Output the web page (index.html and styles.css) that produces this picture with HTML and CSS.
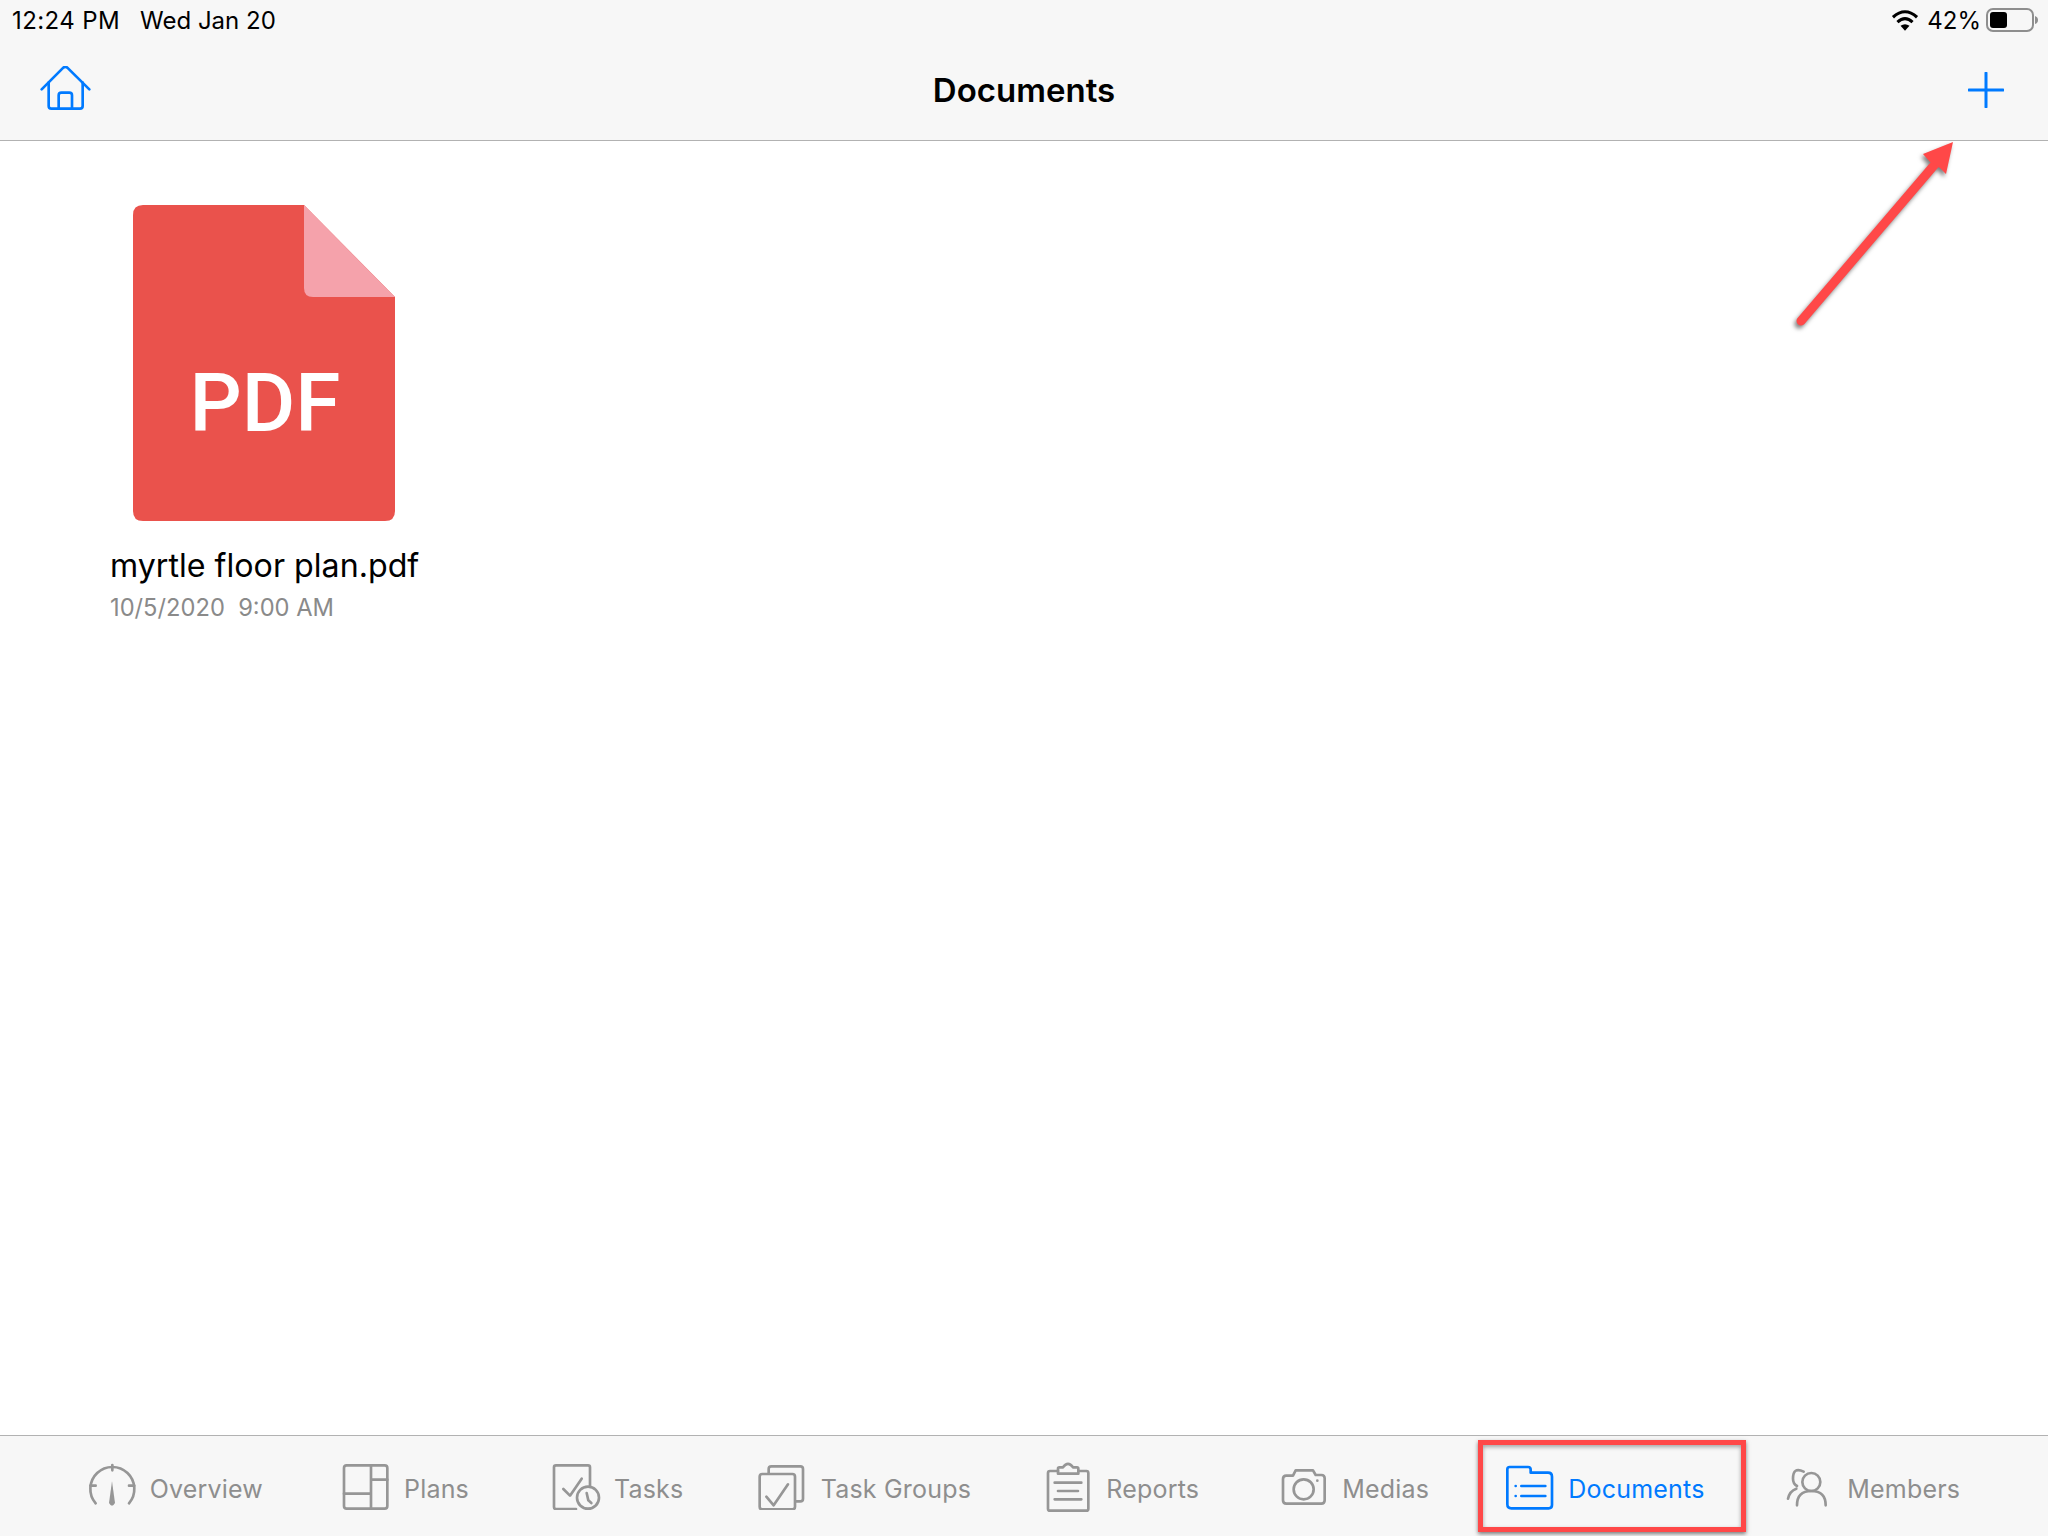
FILE: index.html
```html
<!DOCTYPE html>
<html lang="en">
<head>
<meta charset="utf-8">
<title>Documents</title>
<link rel="stylesheet" href="styles.css">
</head>
<body>
<div class="app">
  <header class="topbar">
    <div class="status">
      <div class="status-left"><span class="status-time">12:24 PM</span><span>Wed Jan 20</span></div>
      <div class="status-right">
        <svg class="wifi" viewBox="95 26 80 64"><path class="wifi-arc" d="M100 50Q135 18 170 50"/><path class="wifi-arc" d="M113 64Q135 44 157 64"/><path class="wifi-dot" d="M122 75Q135 65 148 75L135 89Z"/></svg>
        <span class="battery-text">42%</span>
        <svg class="battery" viewBox="0 0 52 24"><rect class="battery-shell" x="1" y="1" width="46" height="22" rx="6"/><rect class="battery-fill" x="4" y="4" width="17" height="16" rx="3"/><path class="battery-nub" d="M49 8q3 1 3 4t-3 4z"/></svg>
      </div>
    </div>
    <nav class="nav">
      <svg class="home-icon" viewBox="120 198 156 144"><path d="M125 268L190 203q6-5 12 0L268 268"/><path d="M146 248V318q0 8 8 8H240q8 0 8-8V248"/><path d="M176 326V286q0-8 8-8H208q8 0 8 8V326"/></svg>
      <h1 class="title">Documents</h1>
      <svg class="plus-icon" viewBox="0 0 36 36"><path d="M18 1V35M1 18H35"/></svg>
    </nav>
  </header>

  <main class="content">
    <article class="file">
      <svg class="file-icon" viewBox="0 0 262 316">
        <path class="sheet" d="M10 0H171L262 92V306q0 10-10 10H10q-10 0-10-10V10q0-10 10-10Z"/>
        <path class="fold" d="M171 0L262 92H180q-9 0-9-9Z"/>
        <text class="file-badge" x="132" y="226" text-anchor="middle">PDF</text>
      </svg>
      <div class="file-name">myrtle floor plan.pdf</div>
      <div class="file-date">10/5/2020&nbsp;&nbsp;9:00 AM</div>
    </article>
  </main>

  <footer class="tabbar">
    <div class="tab">
      <svg viewBox="80 125 150 144" class="tab-icon"><path d="M106 249A66 66 0 1 1 206 249"/><path d="M156 134V150M90 196H106M206 196H222"/><path class="solid" d="M155 183L164 248Q155 264 146 248Z"/></svg>
      <span class="tab-label">Overview</span>
    </div>
    <div class="tab">
      <svg viewBox="843 125 150 144" class="tab-icon"><rect x="852" y="135" width="130" height="130" rx="8"/><path d="M933 135V265M852 220H933M933 178H982"/></svg>
      <span class="tab-label">Plans</span>
    </div>
    <div class="tab">
      <svg viewBox="93 125 150 144" class="tab-icon"><path d="M168 266H108q-6 0-6-6V141q0-6 6-6H204q6 0 6 6V196"/><path d="M130 206L150 226L185 175"/><circle cx="204" cy="232" r="33"/><path d="M200 218L205 240L214 248"/></svg>
      <span class="tab-label">Tasks</span>
    </div>
    <div class="tab">
      <svg viewBox="713 125 150 144" class="tab-icon"><path d="M745 160V146q0-8 8-8H840q8 0 8 8V235q0 8-8 8H825"/><rect x="718" y="161" width="106" height="106" rx="8"/><path d="M738 229L760 255L803 192"/></svg>
      <span class="tab-label">Task Groups</span>
    </div>
    <div class="tab">
      <svg viewBox="130 125 150 144" class="tab-icon tab-icon-tall"><path d="M175 152H151q-6 0-6 6V265q0 6 6 6H260q6 0 6-6V158q0-6-6-6H236"/><path d="M175 160V145q0-4 4-4H190Q205 120 220 141H232q4 0 4 4V160Z"/><path d="M165 187H245M175 212H235M165 237H245"/></svg>
      <span class="tab-label">Reports</span>
    </div>
    <div class="tab">
      <svg viewBox="838 125 150 144" class="tab-icon"><path d="M860 166H880L888 150H940L948 164H965q10 0 10 10V240q0 10-10 10H860q-10 0-10-10V176q0-10 10-10Z"/><circle cx="912" cy="207" r="30"/><circle class="solid" cx="953" cy="181" r="4"/></svg>
      <span class="tab-label">Medias</span>
    </div>
    <div class="tab tab-active">
      <svg viewBox="136 125 150 144" class="tab-icon"><path d="M150 140H205q8 0 8 8V157H265q12 0 12 12V254q0 10-10 10H155q-12 0-12-12V147q0-7 7-7Z"/><path d="M185 197H257M185 227H257"/><circle class="solid" cx="168" cy="197" r="4"/><circle class="solid" cx="168" cy="227" r="4"/></svg>
      <span class="tab-label">Documents</span>
    </div>
    <div class="tab">
      <svg viewBox="973 125 150 144" class="tab-icon"><circle cx="1055" cy="185" r="27"/><path d="M1012 255Q1012 212 1055 212Q1098 212 1098 255"/><path d="M1032 154Q1000 138 1000 175Q1000 190 1012 197"/><path d="M985 235Q990 212 1010 205"/></svg>
      <span class="tab-label">Members</span>
    </div>
  </footer>

  <svg class="arrow" viewBox="1780 130 190 210"><path class="arrow-line" d="M1801 321L1936 163"/><path class="arrow-head" d="M1953 142L1923 154L1930 162L1940 168L1946 174Z"/></svg>
  <div class="highlight"></div>
</div>
</body>
</html>
```
FILE: styles.css
```css
* { box-sizing: border-box; }
html, body { margin: 0; padding: 0; background: #fff; }
.app {
  position: relative;
  width: 2048px;
  height: 1536px;
  display: flex;
  flex-direction: column;
  overflow: hidden;
  font-family: Inter, "Liberation Sans", sans-serif;
  color: #000;
}

.topbar {
  height: 141px;
  background: #f7f7f7;
  border-bottom: 1px solid #b2b2b2;
  flex: none;
}
.status {
  height: 40px;
  display: flex;
  justify-content: space-between;
  align-items: center;
  padding: 0 10px 0 12px;
  font-size: 24px;
}
.status-left { display: flex; gap: 20px; }
.status-time { letter-spacing: 0.4px; }
.status-right { display: flex; align-items: center; }
.wifi { width: 28px; height: 22px; margin-right: 8px; }
.wifi-arc { fill: none; stroke: #000; stroke-width: 9; }
.wifi-dot { fill: #000; }
.battery-text { margin-right: 5px; }
.battery { width: 52px; height: 24px; }
.battery-shell { fill: none; stroke: #8e8e8e; stroke-width: 2; }
.battery-fill { fill: #000; }
.battery-nub { fill: #8e8e8e; }

.nav {
  height: 100px;
  display: grid;
  grid-template-columns: 1fr auto 1fr;
  align-items: center;
  padding: 0 40px;
}
.title {
  margin: 0;
  font-size: 33px;
  font-weight: 600;
  line-height: 40px;
}
.home-icon { width: 52px; height: 48px; fill: none; stroke: #007aff; stroke-width: 8; stroke-linecap: round; stroke-linejoin: round; }
.plus-icon { justify-self: end; margin-right: 4px; width: 36px; height: 36px; fill: none; stroke: #007aff; stroke-width: 3; stroke-linecap: round; }

.content { flex: 1; padding: 64px 0 0 110px; }
.file { width: 320px; }
.file-icon { display: block; width: 262px; height: 316px; margin-left: 23px; }
.sheet { fill: #ea524c; }
.fold { fill: #f5a2ab; }
.file-badge { font-family: Roboto, sans-serif; font-size: 82px; font-weight: 500; fill: #fff; }
.file-name { margin-top: 26px; font-size: 32.2px; line-height: 38px; white-space: nowrap; }
.file-date { margin-top: 8px; font-size: 23.7px; line-height: 30px; color: #8a8a8a; white-space: nowrap; }

.tabbar {
  height: 101px;
  flex: none;
  display: grid;
  grid-template-columns: 254.33px 210px 206.67px 285.67px 236px 226px 279px 1fr;
  align-items: center;
  padding-left: 86.67px;
  background: #f7f7f7;
  border-top: 1px solid #b2b2b2;
}
.tab { display: flex; align-items: center; gap: 13px; color: #8e8e8e; }
.tab-icon {
  width: 50px;
  height: 48px;
  flex: none;
  fill: none;
  stroke: #969696;
  stroke-width: 8;
  stroke-linecap: round;
  stroke-linejoin: round;
}
.tab-icon .solid { fill: #969696; stroke: none; }
.tab-icon-tall { overflow: visible; }
.tab-label { font-size: 25px; line-height: 30px; padding-top: 5px; letter-spacing: 0.2px; }
.tab-active { color: #007aff; }
.tab-active .tab-icon { stroke: #007aff; }
.tab-active .tab-icon .solid { fill: #007aff; }

.arrow {
  position: absolute;
  left: 1780px;
  top: 130px;
  width: 190px;
  height: 210px;
  overflow: visible;
  filter: drop-shadow(-2px 3px 2px rgba(0, 0, 0, 0.5));
}
.arrow-line { fill: none; stroke: #ff4848; stroke-width: 9; stroke-linecap: round; }
.arrow-head { fill: #ff4848; }
.highlight {
  position: absolute;
  left: 1478px;
  top: 1440px;
  width: 268px;
  height: 92px;
  border: 5px solid #ff4848;
  box-shadow: 0 2px 4px rgba(0, 0, 0, 0.5), inset 0 2px 4px rgba(0, 0, 0, 0.35);
}
```
